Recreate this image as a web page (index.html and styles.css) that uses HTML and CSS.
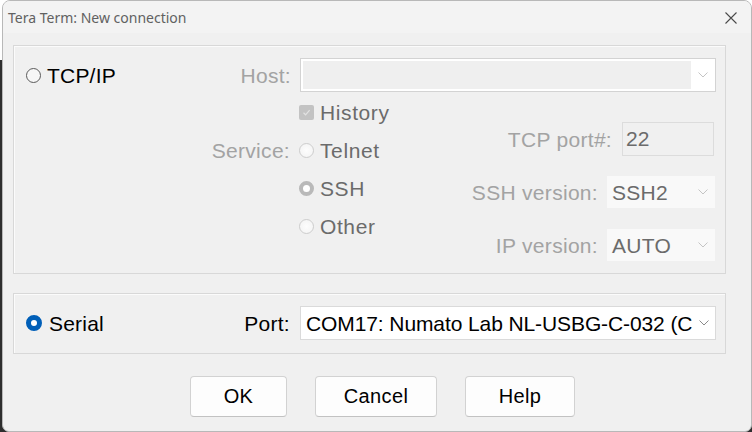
FILE: index.html
```html
<!DOCTYPE html>
<html>
<head>
<meta charset="utf-8">
<title>Tera Term: New connection</title>
<link rel="stylesheet" href="styles.css">
</head>
<body>
<div class="window">
  <div class="titlebar">
    <span class="title">Tera Term: New connection</span>
    <svg class="close" width="12" height="12" viewBox="0 0 12 12"><path d="M0.5 0.5L11.5 11.5M11.5 0.5L0.5 11.5" stroke="#4a4a4a" stroke-width="1.1" fill="none"/></svg>
  </div>
  <div class="content">
    <div class="group g1">
      <div class="row">
        <div class="opt main"><span class="radio"></span><span>TCP/IP</span></div>
        <span class="lbl dis">Host:</span>
        <div class="combo off wide"><span class="val"></span><span class="drop"><svg width="10" height="6" viewBox="0 0 10 6"><path d="M0.5 0.5L5 5L9.5 0.5" stroke="#c4c4c4" fill="none"/></svg></span></div>
      </div>
      <div class="lower">
        <div class="svc">
          <span></span>
          <div class="opt dim"><span class="check"><svg width="11" height="11" viewBox="0 0 11 11"><path d="M2.5 5.8L4.6 7.8L8.6 3.2" stroke="#e2e2e2" stroke-width="1.2" fill="none"/></svg></span><span>History</span></div>
          <span class="lbl dis">Service:</span>
          <div class="opt dim"><span class="radio off"></span><span>Telnet</span></div>
          <span></span>
          <div class="opt dim"><span class="radio off on"></span><span>SSH</span></div>
          <span></span>
          <div class="opt dim"><span class="radio off"></span><span>Other</span></div>
        </div>
        <div class="side">
          <div class="srow port"><span class="lbl dis">TCP port#:</span><div class="textbox">22</div></div>
          <div class="srow ver"><span class="lbl dis">SSH version:</span><div class="combo flat"><span class="val">SSH2</span><span class="drop"><svg width="10" height="6" viewBox="0 0 10 6"><path d="M0.5 0.5L5 5L9.5 0.5" stroke="#c4c4c4" fill="none"/></svg></span></div></div>
          <div class="srow ip"><span class="lbl dis">IP version:</span><div class="combo flat"><span class="val">AUTO</span><span class="drop"><svg width="10" height="6" viewBox="0 0 10 6"><path d="M0.5 0.5L5 5L9.5 0.5" stroke="#c4c4c4" fill="none"/></svg></span></div></div>
        </div>
      </div>
    </div>
    <div class="group g2">
      <div class="row">
        <div class="opt main"><span class="radio sel"></span><span>Serial</span></div>
        <span class="lbl port-lbl">Port:</span>
        <div class="combo live wide"><span class="val">COM17: Numato Lab NL-USBG-C-032 (C</span><span class="drop"><svg width="10" height="6" viewBox="0 0 10 6"><path d="M0.5 0.5L5 5L9.5 0.5" stroke="#8a8a8a" fill="none"/></svg></span></div>
      </div>
    </div>
    <div class="buttons">
      <button class="btn ok">OK</button>
      <button class="btn cancel">Cancel</button>
      <button class="btn help">Help</button>
    </div>
  </div>
</div>
</body>
</html>
```
FILE: styles.css
```css
html, body {
  margin: 0;
  padding: 0;
}
body {
  width: 752px;
  height: 432px;
  overflow: hidden;
  background: linear-gradient(#ffffff 0, #ffffff 60px, #2e2e2e 60px);
  font-family: "Liberation Sans", Arial, sans-serif;
}
.window {
  margin-left: 2px;
  width: 750px;
  height: 432px;
  box-sizing: border-box;
  border: 1px solid #b8b8b8;
  border-radius: 8px 8px 7px 7px;
  background: #f0f0f0;
  overflow: hidden;
}
.titlebar {
  height: 32px;
  background: #f3f3f3;
  display: flex;
  align-items: center;
  justify-content: space-between;
  padding: 0 14px 0 5px;
}
.title {
  font-family: "Noto Sans", "Open Sans", sans-serif;
  font-size: 14px;
  color: #616161;
  margin-top: 1px;
}
.close {
  display: block;
  margin-top: 2px;
}
.content {
  padding: 12px 25px 0 10px;
}
.group {
  border: 1px solid #d8d8d8;
  box-shadow: inset 1px 1px 0 #fbfbfb;
  padding: 12px 9px 12px 12px;
}
.g1 {
  padding-bottom: 13px;
}
.g2 {
  margin-top: 19px;
  padding-bottom: 13px;
}
.row {
  display: flex;
  align-items: center;
  height: 34px;
}
.opt {
  display: flex;
  align-items: center;
  gap: 6px;
  font-size: 21px;
  line-height: 1;
}
.opt.main {
  flex: 1;
  color: #000;
}
.opt.main span + span {
  letter-spacing: 0.2px;
}
.opt.dim {
  color: #6b6b6b;
  letter-spacing: 0.6px;
}
.lbl {
  font-size: 21px;
  line-height: 1;
  color: #000;
  margin-right: 9px;
  white-space: nowrap;
  letter-spacing: 0.3px;
}
.lbl.dis {
  color: #a3a3a3;
}
.port-lbl {
  margin-right: 10px;
}
.radio {
  width: 15px;
  height: 15px;
  box-sizing: border-box;
  border-radius: 50%;
  border: 1px solid #5a5a5a;
  background: #f7f7f7;
  flex: none;
}
.radio.off {
  border-color: #cdcdcd;
  background: radial-gradient(circle, #fdfdfd 0, #f2f2f2 100%);
}
.radio.off.on {
  border: 4px solid #b9b9b9;
  background: #ffffff;
}
.radio.sel {
  width: 16px;
  height: 16px;
  border: 5px solid #005fb8;
  background: #ffffff;
  margin-right: 1px;
}
.check {
  width: 15px;
  height: 15px;
  border-radius: 2px;
  background: #c3c3c3;
  display: flex;
  align-items: center;
  justify-content: center;
  flex: none;
}
.check svg {
  display: block;
}
.combo {
  display: flex;
  align-items: stretch;
  box-sizing: border-box;
  height: 34px;
  overflow: hidden;
}
.combo.wide {
  width: 416px;
}
.combo .val {
  flex: 1;
  display: flex;
  align-items: center;
  padding-left: 5px;
  font-size: 21px;
  line-height: 1;
  white-space: nowrap;
  overflow: hidden;
  min-width: 0;
}
.combo .drop {
  width: 24px;
  flex: none;
  display: flex;
  align-items: center;
  justify-content: center;
}
.combo .drop svg {
  display: block;
}
.combo.off {
  border: 1px solid #d3d3d3;
  background: #ffffff;
  padding: 2px 0 2px 2px;
}
.combo.off .val {
  background: #efefef;
}
.combo.live {
  border: 1px solid #dadada;
  background: #ffffff;
  color: #000;
}
.combo.live .val {
  padding-left: 5px;
  letter-spacing: -0.1px;
}
.combo.live .drop {
  width: 22px;
}
.combo.flat {
  width: 108px;
  height: 32px;
  background: #f9f9f9;
  color: #6b6b6b;
}
.combo.flat .val {
  letter-spacing: 0.3px;
}
.lower {
  display: flex;
  justify-content: space-between;
  height: 168px;
}
.svc {
  margin-top: 1px;
  display: grid;
  grid-template-columns: 264px auto;
  grid-auto-rows: 38px;
  column-gap: 9px;
  align-items: center;
  justify-items: start;
}
.svc .lbl {
  justify-self: end;
  margin-right: 0;
}
.side {
  display: flex;
  flex-direction: column;
  align-items: flex-end;
  padding-top: 30px;
  gap: 20px;
  margin-right: 1px;
}
.srow {
  display: flex;
  align-items: center;
}
.srow.ip {
  margin-top: 1px;
}
.srow.port .lbl {
  margin-right: 10px;
}
.textbox {
  width: 92px;
  height: 34px;
  box-sizing: border-box;
  border: 1px solid #dcdcdc;
  background: #f0f0f0;
  color: #6b6b6b;
  font-size: 21px;
  line-height: 1;
  padding: 5px 0 0 3px;
  margin-right: 1px;
}
.buttons {
  display: flex;
  gap: 28px;
  margin-top: 22px;
  padding-left: 177px;
}
.btn {
  height: 41px;
  box-sizing: border-box;
  border: 1px solid #d2d2d2;
  border-bottom-color: #c2c2c2;
  border-radius: 4px;
  background: #fdfdfd;
  font-family: "Liberation Sans", Arial, sans-serif;
  font-size: 20px;
  color: #000;
  padding: 0;
  letter-spacing: 0.4px;
}
.btn.ok { width: 97px; }
.btn.cancel { width: 122px; }
.btn.help { width: 110px; }
```
